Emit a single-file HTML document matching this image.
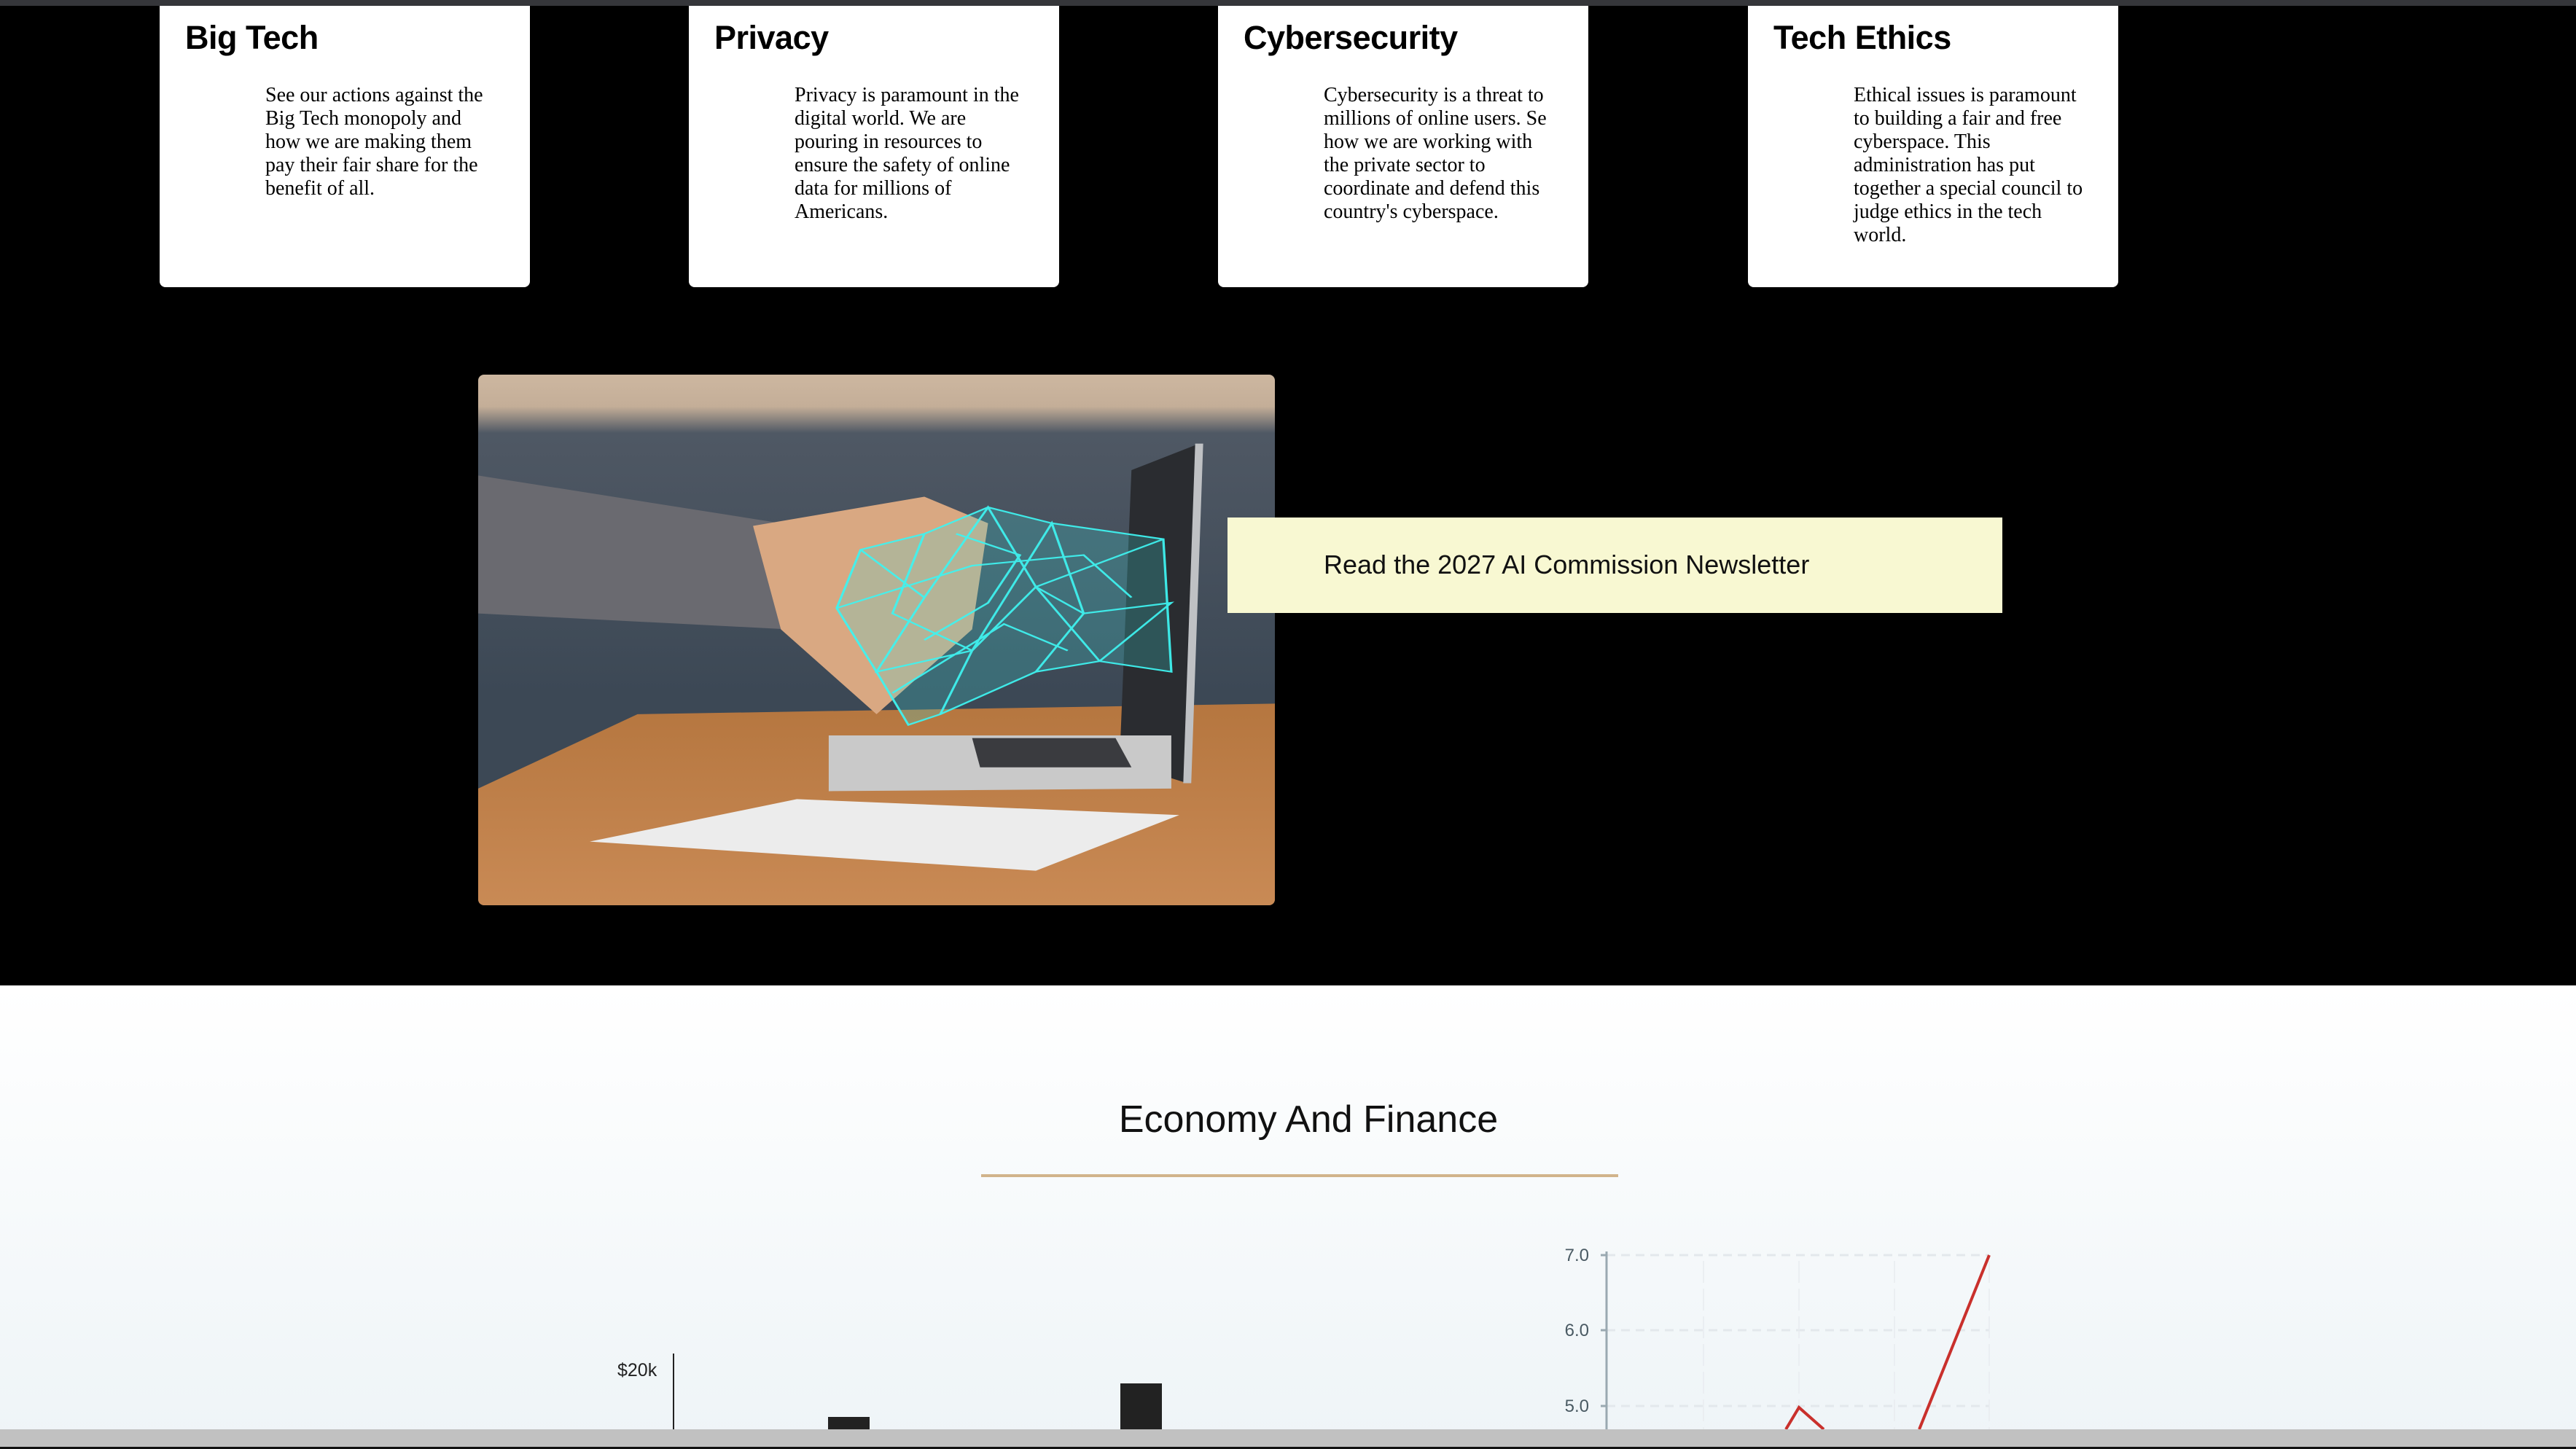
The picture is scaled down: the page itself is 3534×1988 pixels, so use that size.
<!DOCTYPE html>
<html><head><meta charset="utf-8"><style>
*{margin:0;padding:0;box-sizing:border-box}
html,body{width:3534px;height:1988px;overflow:hidden}
body{position:relative;background:#000;font-family:"Liberation Sans",Arial,sans-serif}
.topbar{position:absolute;left:0;top:0;width:3534px;height:8px;background:#35363a}
.card{position:absolute;top:8px;width:508px;height:386px;background:#fff;border-radius:0 0 8px 8px}
.card h3{position:absolute;left:35px;top:18px;font-size:45px;font-weight:bold;color:#000;white-space:nowrap;letter-spacing:-0.5px}
.card p{position:absolute;left:145px;top:107px;font-family:"Liberation Serif",serif;font-size:28px;line-height:32px;color:#000;white-space:nowrap}
.photo{position:absolute;left:656px;top:514px;width:1093px;height:728px;border-radius:8px;overflow:hidden}
.news{position:absolute;left:1684px;top:710px;width:1063px;height:131px;background:#f8f8d2}
.news span{position:absolute;left:132px;top:44px;font-size:36px;color:#111;white-space:nowrap}
.lower{position:absolute;left:0;top:1352px;width:3534px;height:636px;background:linear-gradient(#ffffff,#eef4f7)}
.h2{position:absolute;left:28px;width:3534px;top:1506px;text-align:center;font-size:52px;color:#111}
.rule{position:absolute;left:1346px;top:1611px;width:874px;height:4px;background:#d1b38b}
.scroll{position:absolute;left:0;top:1961px;width:3534px;height:24px;background:#c1c1c1}
.scroll2{position:absolute;left:0;top:1985px;width:3534px;height:3px;background:#111}
</style></head><body>
<div class="topbar"></div>
<div class="card" style="left:219px"><h3>Big Tech</h3><p>See our actions against the<br>Big Tech monopoly and<br>how we are making them<br>pay their fair share for the<br>benefit of all.</p></div>
<div class="card" style="left:945px"><h3>Privacy</h3><p>Privacy is paramount in the<br>digital world. We are<br>pouring in resources to<br>ensure the safety of online<br>data for millions of<br>Americans.</p></div>
<div class="card" style="left:1671px"><h3>Cybersecurity</h3><p>Cybersecurity is a threat to<br>millions of online users. Se<br>how we are working with<br>the private sector to<br>coordinate and defend this<br>country's cyberspace.</p></div>
<div class="card" style="left:2398px"><h3>Tech Ethics</h3><p>Ethical issues is paramount<br>to building a fair and free<br>cyberspace. This<br>administration has put<br>together a special council to<br>judge ethics in the tech<br>world.</p></div>

<div class="photo">
<svg width="1093" height="728" viewBox="0 0 1000 1000" preserveAspectRatio="none">
<defs>
<linearGradient id="bg" x1="0" y1="0" x2="0" y2="1">
<stop offset="0" stop-color="#cdb7a0"/><stop offset="0.06" stop-color="#c4ae98"/><stop offset="0.11" stop-color="#4f5864"/><stop offset="0.6" stop-color="#3c4855"/></linearGradient>
<linearGradient id="wood" x1="0" y1="0" x2="0" y2="1"><stop offset="0" stop-color="#b5763f"/><stop offset="1" stop-color="#c98a55"/></linearGradient>
</defs>
<rect width="1000" height="1000" fill="url(#bg)"/>
<polygon points="0,780 200,640 1000,620 1000,1000 0,1000" fill="url(#wood)"/>
<polygon points="0,190 380,280 390,480 0,450" fill="#6a6a70"/>
<polygon points="345,285 560,230 640,280 620,480 500,640 380,480" fill="#d9a882"/>
<polygon points="820,180 905,130 890,770 805,730" fill="#2a2c30"/>
<polygon points="900,130 910,130 895,770 885,770" fill="#bfc1c4"/>
<polygon points="440,680 870,680 870,780 440,785" fill="#c9c9c9"/>
<polygon points="620,685 800,685 820,740 630,740" fill="#3a3b3f"/>
<polygon points="140,880 400,800 880,830 700,935" fill="#ececec"/>
<g fill="none" stroke="#3ff3f0" stroke-width="3" opacity="0.95">
<polygon points="450,440 480,330 560,300 640,250 720,280 860,310 870,560 780,540 700,560 580,640 540,660 500,560" fill="rgba(60,220,220,0.25)"/>
<path d="M480,330 L560,420 L640,250 L700,400 L860,310 M560,420 L500,560 L620,520 L700,400 L780,540 M620,520 L580,640 M560,300 L520,450 L620,520 L720,280 L760,450 L870,430 L780,540 M700,400 L760,450 L700,560 M450,440 L620,360 L760,340 L820,420 M520,600 L660,470 L740,520 M600,300 L680,340 L640,430 L560,500"/>
</g>
</svg>
</div>
<div class="news"><span>Read the 2027 AI Commission Newsletter</span></div>

<div class="lower"></div>
<div class="h2">Economy And Finance</div>
<div class="rule"></div>

<svg style="position:absolute;left:0;top:1600px" width="3534" height="361" viewBox="0 1600 3534 361">
<text x="847" y="1888" font-family="Liberation Sans,sans-serif" font-size="25" fill="#222">$20k</text>
<line x1="924" y1="1857" x2="924" y2="1961" stroke="#222" stroke-width="2"/>
<rect x="1136" y="1944" width="57" height="17" fill="#222"/>
<rect x="1537" y="1898" width="57" height="63" fill="#222"/>
<g stroke="#e3e8ec" stroke-width="3" stroke-dasharray="12 8">
<line x1="2204" y1="1722" x2="2729" y2="1722"/><line x1="2204" y1="1825" x2="2729" y2="1825"/><line x1="2204" y1="1929" x2="2729" y2="1929"/>
</g>
<g stroke="#e8ecef" stroke-width="1.5" stroke-dasharray="30 8">
<line x1="2337" y1="1730" x2="2337" y2="1961"/><line x1="2468" y1="1730" x2="2468" y2="1961"/><line x1="2599" y1="1730" x2="2599" y2="1961"/><line x1="2729" y1="1730" x2="2729" y2="1961"/>
</g>
<line x1="2204" y1="1717" x2="2204" y2="1961" stroke="#9aa9b1" stroke-width="3"/>
<g stroke="#9aa9b1" stroke-width="3"><line x1="2196" y1="1722" x2="2204" y2="1722"/><line x1="2196" y1="1825" x2="2204" y2="1825"/><line x1="2196" y1="1929" x2="2204" y2="1929"/></g>
<g font-family="Liberation Sans,sans-serif" font-size="24" fill="#4a5a63" text-anchor="end">
<text x="2180" y="1730">7.0</text><text x="2180" y="1833">6.0</text><text x="2180" y="1937">5.0</text></g>
<polyline points="2450,1961 2468,1931 2502,1961" fill="none" stroke="#c9302c" stroke-width="4"/>
<polyline points="2633,1961 2729,1722" fill="none" stroke="#c9302c" stroke-width="4"/>
</svg>
<div class="scroll"></div>
<div class="scroll2"></div>
</body></html>
